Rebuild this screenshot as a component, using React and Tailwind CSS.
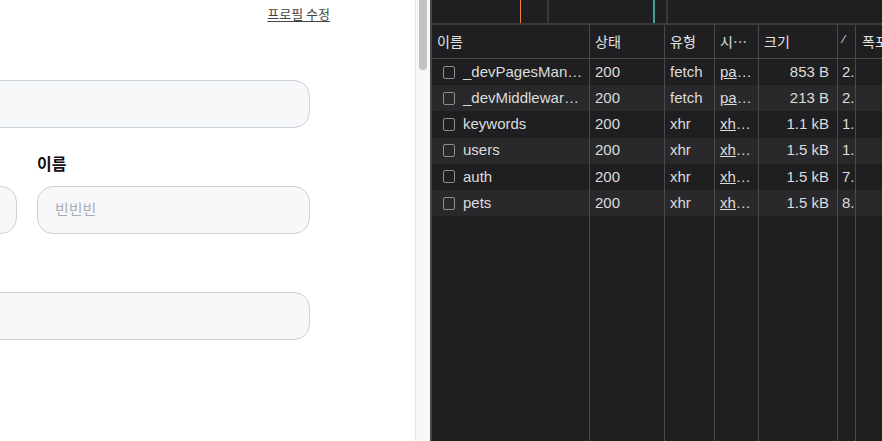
const rows = [
  { name: '_devPagesMan…', status: '200', type: 'fetch', init: 'pa', size: '853 B', time: '2.' },
  { name: '_devMiddlewar…', status: '200', type: 'fetch', init: 'pa', size: '213 B', time: '2.' },
  { name: 'keywords', status: '200', type: 'xhr', init: 'xh', size: '1.1 kB', time: '1.' },
  { name: 'users', status: '200', type: 'xhr', init: 'xh', size: '1.5 kB', time: '1.' },
  { name: 'auth', status: '200', type: 'xhr', init: 'xh', size: '1.5 kB', time: '7.' },
  { name: 'pets', status: '200', type: 'xhr', init: 'xh', size: '1.5 kB', time: '8.' },
];

const kr = { fontFamily: '"Noto Sans CJK KR", "Noto Sans", sans-serif' };
const dt = { fontFamily: '"Liberation Sans", "Noto Sans CJK KR", sans-serif' };

const Cells = ({ children = [], className = '' }) => {
  const widths = ['w-[158px]', 'w-[75px]', 'w-[50px]', 'w-[44px]', 'w-[79px]', 'w-[18px]'];
  return (
    <div className={`flex ${className}`}>
      {widths.map((w, i) => (
        <div key={i} className={`${w} shrink-0 border-r border-[#4a4a4c] flex items-center overflow-hidden whitespace-nowrap`}>
          {children[i]}
        </div>
      ))}
      <div className="flex-1 flex items-center overflow-hidden whitespace-nowrap">{children[6]}</div>
    </div>
  );
};

export default function App() {
  return (
    <div className="w-[882px] h-[441px] flex overflow-hidden bg-white">
      {/* page */}
      <div className="w-[415px] h-full overflow-hidden relative shrink-0" style={kr}>
        <div className="flex justify-end pr-[85px] pt-[4px]">
          <span className="text-[13px] text-[#444] underline underline-offset-2">프로필 수정</span>
        </div>
        <div className="ml-[-256px] w-[566px] mt-[56px] flex flex-col">
          <div className="h-[48px] rounded-[16px] bg-[#f7f8fa] border border-[#ccd0d7]"></div>
          <div className="grid grid-cols-2 gap-x-[20px] mt-[22px]">
            <div className="flex flex-col">
              <div className="h-[26px]"></div>
              <div className="mt-[10px] h-[48px] rounded-[16px] bg-[#f7f8fa] border border-[#ccd0d7]"></div>
            </div>
            <div className="flex flex-col">
              <div className="h-[26px] text-[16px] font-bold text-[#111] leading-[26px]">이름</div>
              <div className="mt-[10px] h-[48px] rounded-[16px] bg-[#f7f8fa] border border-[#ccd0d7] flex items-center px-[17px] text-[15px] text-[#a9acb2]">빈빈빈</div>
            </div>
          </div>
          <div className="mt-[58px] h-[48px] rounded-[16px] bg-[#f7f8fa] border border-[#ccd0d7]"></div>
        </div>
      </div>
      {/* scrollbar */}
      <div className="w-[15px] h-full bg-[#f8f8f8] border-l border-[#e6e6e6] shrink-0 flex justify-center">
        <div className="w-[8px] h-[70px] bg-[#c2c2c2] rounded-b-[4px]"></div>
      </div>
      {/* devtools */}
      <div className="flex-1 h-full bg-[#1f1f21] border-l-2 border-[#464648] flex flex-col text-[15px] text-[#dcdcdc]" style={dt}>
        <div className="h-[25px] border-b-2 border-[#3c3c3e] shrink-0 flex">
          <div className="w-[88px] shrink-0"></div>
          <div className="w-[1px] bg-[#e8853f] shrink-0"></div>
          <div className="w-[26px] shrink-0"></div>
          <div className="w-[2px] bg-[#38383a] shrink-0"></div>
          <div className="w-[104px] shrink-0"></div>
          <div className="w-[2px] bg-[#3fa397] shrink-0"></div>
          <div className="w-[11px] shrink-0"></div>
          <div className="w-[2px] bg-[#38383a] shrink-0"></div>
        </div>
        <Cells className="h-[34px] border-b border-[#4a4a4c] shrink-0 text-[14px] text-[#e3e3e3]" >
          {[
            <span className="pl-[5px]" style={kr}>이름</span>,
            <span className="pl-[5px]" style={kr}>상태</span>,
            <span className="pl-[5px]" style={kr}>유형</span>,
            <span className="pl-[5px]" style={kr}>시…</span>,
            <span className="pl-[5px]" style={kr}>크기</span>,
            <span className="pl-[5px] text-[11px] -mt-[4px]">⁄</span>,
            <span className="pl-[6px]" style={kr}>폭포</span>,
          ]}
        </Cells>
        {rows.map((r, i) => (
          <Cells key={i} className={`h-[26.2px] shrink-0 ${i % 2 ? 'bg-[#29292b]' : ''}`}>
            {[
              <div className="flex items-center pl-[11px] gap-[8px]">
                <span className="w-[12px] h-[13px] border border-[#8e8e90] rounded-[2px] shrink-0"></span>
                <span>{r.name}</span>
              </div>,
              <span className="pl-[5px]">{r.status}</span>,
              <span className="pl-[5px]">{r.type}</span>,
              <span className="pl-[5px]"><span className="underline">{r.init}</span>…</span>,
              <span className="w-full text-right pr-[8px]">{r.size}</span>,
              <span className="pl-[4px]">{r.time}</span>,
              null,
            ]}
          </Cells>
        ))}
        <Cells className="flex-1">{[]}</Cells>
      </div>
    </div>
  );
}
